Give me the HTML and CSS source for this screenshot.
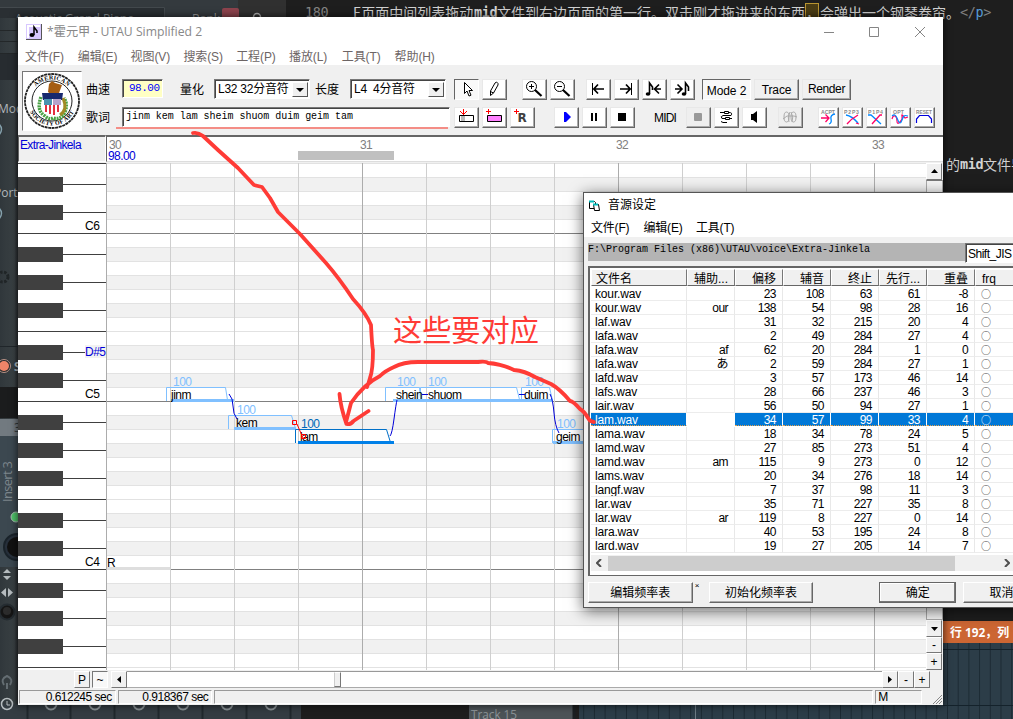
FILE: index.html
```html
<!DOCTYPE html>
<html lang="zh-CN">
<head>
<meta charset="utf-8">
<title>UTAU Simplified 2</title>
<link rel="stylesheet" href="styles.css">
</head>
<body>
<div class="desktop">
  <svg class="backdrop" width="1013" height="719" viewBox="0 0 1013 719">
    <defs>
      <pattern id="beats" x="947" y="0" width="10.7" height="56" patternUnits="userSpaceOnUse"><rect width="11" height="56" fill="#2c3d48"/><rect width="1" height="56" fill="#1c2a33"/></pattern>
      <linearGradient id="rail"><stop offset="0" stop-color="#30373b"/><stop offset=".8" stop-color="#3a4144"/><stop offset="1" stop-color="#282c2f"/></linearGradient>
    </defs>
    <rect width="1013" height="719" fill="#1e1e1e"/>
    <rect width="240" height="18" fill="#343a3e"/><rect y="7" width="165" height="11" fill="#2a2f33"/>
    <path d="M0 7.500h164.500V18" fill="none" stroke="#43494d"/>
    <rect x="238" width="48" height="18" fill="#303030"/>
    <text class="ui" x="15" y="23" fill="#8b9295">Acoustic Grand Piano</text>
    <rect x="222" y="8" width="17" height="12" rx="2" fill="#8d434d"/><text class="ui" x="192" y="22.500" fill="#999">Bank</text>
    <circle cx="257" cy="17" r="3.500" fill="none" stroke="#aaa" stroke-width="1.500"/>
    <text class="code" x="305" y="17" fill="#858585">180</text>
    <text class="cjk" x="353" y="17.500">E页面中间列表拖动</text>
    <text class="code bold" x="474" y="17" fill="#d4d4d4">mid</text>
    <text class="cjk" x="497" y="17.500" textLength="308">文件到右边页面的第一行。双击刚才拖进来的东西</text>
    <rect x="805.500" y="3.500" width="13" height="16" fill="#4a3c14" stroke="#b89430"/>
    <text class="cjk" x="806" y="17.500">，</text>
    <text class="cjk" x="820" y="17.500" textLength="140">会弹出一个钢琴卷帘。</text>
    <text class="code" x="960" y="17" fill="#808080">&lt;/<tspan fill="#569cd6">p</tspan>&gt;</text>
    <text class="cjk" x="946" y="170">的</text><text class="code bold" x="960" y="169" fill="#d4d4d4">mid</text><text class="cjk" x="983" y="170">文件导</text>
    <rect y="18" width="18" height="701" fill="url(#rail)"/>
    <path d="M0 30.500h18M0 41.500h18M0 53.500h18" stroke="#232729"/>
    <rect y="54" width="18" height="26" fill="#272c30"/>
    <text class="ui" x="-2" y="113" fill="#b2b8bb">Mod</text><text class="ui" x="-6" y="197" fill="#b2b8bb">Port.</text>
    <path d="M-2 123q7 6 0 13M-2 207q7 6 0 13" fill="none" stroke="#85a1ad" stroke-width="1.500"/>
    <circle cx="3" cy="277" r="5" fill="none" stroke="#202527" stroke-width="3" stroke-dasharray="2.500 1.500"/>
    <path d="M0 346.500h18" stroke="#20262a"/>
    <circle cx="4" cy="366" r="6.500" fill="#27292a" stroke="#b69186"/><circle cx="4" cy="366" r="5" fill="#f08568"/><text class="ui bold" x="14" y="371" fill="#b2b8bb">S</text>
    <rect y="387" width="18" height="31" fill="#1b1c1d"/><rect y="419" width="18" height="17" fill="#727a80"/><text class="ui" x="14" y="432" fill="#31393d">3</text>
    <rect y="436" width="18" height="131" fill="#3c4850"/>
    <text class="insert" transform="translate(12 502) rotate(-90)">Insert 3</text>
    <circle cx="16" cy="517" r="5" fill="#51c56b" stroke="#a9bcb0"/>
    <circle cx="17" cy="547" r="13" fill="#27303b" stroke="#1a232a" stroke-width="2"/><circle cx="17" cy="547" r="10" fill="#111"/>
    <path d="M3 573l4-4 4 4zM3 576l4 4 4-4zM6 588v9l-5-4.500zM8 588v9l5-4.500z" fill="#b5bbbe"/>
    <circle cx="7" cy="612" r="7.500" fill="#151515" stroke="#252c31" stroke-width="2"/><circle cx="7" cy="611" r="4" fill="#2c2c2c"/>
    <path d="M7 689v-6m-3 2q-4-6 3-9q7 3 3 9" fill="none" stroke="#646d72" stroke-width="2"/>
    <rect y="704" width="301" height="15" fill="#343c42"/>
    <circle cx="7" cy="704" r="5.500" fill="none" stroke="#b7bdc0" stroke-width="1.500"/><path d="M7 701v4h3" fill="none" stroke="#b7bdc0"/>
    <g fill="none" stroke="#8b9397" stroke-width="2"><circle cx="51" cy="704" r="5.500"/><circle cx="95" cy="704" r="5.500"/><circle cx="139" cy="704" r="5.500"/><circle cx="183" cy="704" r="5.500"/><circle cx="227" cy="704" r="5.500"/><circle cx="271" cy="704" r="5.500"/></g>
    <path d="M27.500 705v14M70.500 705v14M114.500 705v14M158.500 705v14M202.500 705v14M246.500 705v14M290.500 705v14" stroke="#20282d" stroke-width="2"/>
    <rect x="469" y="705" width="106" height="14" fill="#4c5357"/><path d="M574 705v14" stroke="#1b1f22" stroke-width="3"/>
    <text class="track" x="471" y="718.500" textLength="46" lengthAdjust="spacingAndGlyphs">Track 15</text>
    <rect x="579" y="705" width="434" height="14" fill="url(#beats)"/><rect x="695" y="705" width="1" height="14" fill="#6c7b84"/>
    <rect x="943" y="643" width="70" height="76" fill="url(#beats)"/><path d="M943 649.500h70M943 705.500h70" stroke="#14222b"/>
    <rect x="943" y="621" width="70" height="22" fill="#cc6633"/><text class="pos" x="950" y="637" textLength="59" lengthAdjust="spacingAndGlyphs">行 192，列</text>
  </svg>

  <main class="window">
    <header class="titlebar">
      <svg width="16" height="16" viewBox="0 0 16 16"><rect width="16" height="16" fill="#d8c8ff"/><path d="M0 15.500h15.500V0" fill="none" stroke="#555"/><path d="M2 14V2h12" fill="none" stroke="#fff" stroke-width="2"/><ellipse cx="6" cy="11" rx="2.500" ry="2"/><path d="M8 11V3l3 4v2" fill="none" stroke="#000" stroke-width="1.500"/></svg>
      <span class="title">*霍元甲 - UTAU Simplified 2</span>
      <svg class="controls" width="104" height="12" viewBox="0 0 104 12" fill="none" stroke="#858585"><path d="M0 6.500h10M45.500 1.500h9v9h-9zM91 1l10 10M101 1L91 11"/></svg>
    </header>
    <nav class="menu"><span>文件(F)</span><span>编辑(E)</span><span>视图(V)</span><span>搜索(S)</span><span>工程(P)</span><span>播放(L)</span><span>工具(T)</span><span>帮助(H)</span></nav>
    <section class="toolbar">
      <div class="logo">
        <svg width="56" height="56" viewBox="0 0 56 56">
          <circle cx="28" cy="28" r="27" fill="#fff" stroke="#222" stroke-width="1.800" stroke-dasharray="3 .6"/><circle cx="28" cy="28" r="20" fill="none" stroke="#222"/>
          <path id="sealTop" d="M6.500 28a21.500 21.500 0 0 1 43 0" fill="none"/><path id="sealBottom" d="M3.500 28a24.500 24.500 0 0 0 49 0" fill="none"/>
          <text class="seal"><textPath href="#sealTop" startOffset="50%">AMERICAN</textPath></text><text class="seal"><textPath href="#sealBottom" startOffset="50%">SOCIETY OF ART</textPath></text>
          <path d="M17 24q-5 14 4 19 4 4 8 2 9 2 12-6 3-8-1-14" fill="none" stroke="#48a044" stroke-width="3.500" stroke-dasharray="2 .8"/><path d="M39 25q5 12-3 17" fill="none" stroke="#a18a25" stroke-width="3"/>
          <path d="M25 11l3-3 3 2 7 2-3 8-6 3-5-4z" fill="#a55d13"/><path d="M18 20h21l-1 7H19z" fill="#17286e"/><path d="M20 26h16v12l-7 5-9-5z" fill="#fff"/><path d="M22 32v7M26 32v9M30 32v10M34 32v7" stroke="#e32e3f" stroke-width="2"/><path d="M20 26h8v6h-8z" fill="#4a91af"/><path d="M29 26h8v6h-8z" fill="#b6a3cb"/>
        </svg>
      </div>
      <div class="bars">
        <div class="bar">
          <span class="lab l1">曲速</span><span class="field tempo">98.00</span>
          <span class="lab l2">量化</span><span class="field combo"><span>L32 32分音符</span><i class="drop"><svg width="8" height="4"><path d="M0 0h8L4 4z"/></svg></i></span>
          <span class="lab l3">长度</span><span class="field combo"><span>L4&nbsp; 4分音符</span><i class="drop"><svg width="8" height="4"><path d="M0 0h8L4 4z"/></svg></i></span>
          <div class="group g8">
            <b class="btn down"><svg viewBox="0 0 25 21"><path d="M10.500 3.500v11l2.500-2.500 2 5 2-.8-2-4.700h3.500z" fill="#fff" stroke="#000"/></svg></b>
            <b class="btn"><svg viewBox="0 0 25 21"><path d="M8.500 16.500v-4.500L13 4l1.500-1 1.500 1.500v1.500L11.500 14zM8.500 12.500l3 1.500" fill="#fff" stroke="#000"/></svg></b>
          </div>
          <div class="group g15">
            <b class="btn"><svg viewBox="0 0 25 21"><circle cx="9.500" cy="7.500" r="5" fill="none" stroke="#000"/><path d="M7 7.500h5M9.500 5v5" stroke="#000"/><path d="M13 11l6.500 6" stroke="#000" stroke-width="2.200"/></svg></b>
            <b class="btn"><svg viewBox="0 0 25 21"><circle cx="9.500" cy="7.500" r="5" fill="none" stroke="#000"/><path d="M7 7.500h5" stroke="#000"/><path d="M13 11l6.500 6" stroke="#000" stroke-width="2.200"/></svg></b>
          </div>
          <div class="group g11">
            <b class="btn"><svg viewBox="0 0 25 21"><path d="M6.500 4v12" stroke="#000"/><path d="M18 10H8M12 5.500L7.800 10l4.200 4.500" fill="none" stroke="#000" stroke-width="1.700"/></svg></b>
            <b class="btn"><svg viewBox="0 0 25 21"><path d="M17.500 4v12" stroke="#000"/><path d="M6 10h10M12 5.500l4.200 4.500-4.200 4.500" fill="none" stroke="#000" stroke-width="1.700"/></svg></b>
            <b class="btn"><svg viewBox="0 0 25 21"><ellipse cx="6" cy="15" rx="2.300" ry="1.800"/><path d="M7.500 15V4l3 4v3M19 10h-6M17 5.500L12.500 10l4.500 4.500" fill="none" stroke="#000" stroke-width="1.600"/></svg></b>
            <b class="btn"><svg viewBox="0 0 25 21"><ellipse cx="14" cy="15" rx="2.300" ry="1.800"/><path d="M15.500 15V4l3 4v4M5 10h6M7.500 5.500L12 10l-4.500 4.500" fill="none" stroke="#000" stroke-width="1.600"/></svg></b>
          </div>
          <div class="group g7 words"><b class="btn down mode">Mode 2</b><b class="btn trace">Trace</b><b class="btn render">Render</b></div>
        </div>
        <div class="bar">
          <span class="lab l1">歌词</span><span class="field lyric">jinm kem lam sheim shuom duim geim tam</span>
          <div class="group g4">
            <b class="btn"><svg viewBox="0 0 25 21"><path d="M5.500 8.500h14v6h-14z" fill="#fff" stroke="#000"/><path d="M7 9h4v5H7z" fill="#bbb"/><path d="M9.500 2v6M6 4l3.500 3.500L13 4" fill="none" stroke="red"/></svg></b>
            <b class="btn"><svg viewBox="0 0 25 21"><path d="M5.500 8.500h14v6h-14z" fill="#ff80ff" stroke="#000"/><path d="M6.500 2v5M4 4.500h5" stroke="red"/></svg></b>
            <b class="btn"><svg viewBox="0 0 25 21"><text class="rest" x="7.500" y="15">R</text><path d="M6.500 2v5M4 4.500h5" stroke="red"/></svg></b>
          </div>
          <div class="group g19">
            <b class="btn"><svg viewBox="0 0 25 21"><path d="M10 5h2l5 5-5 5h-2z" fill="#00f"/></svg></b>
            <b class="btn"><svg viewBox="0 0 25 21"><path d="M9 6h2v8H9zM13 6h2v8h-2z"/></svg></b>
            <b class="btn"><svg viewBox="0 0 25 21"><path d="M8 6h8v8H8z"/></svg></b>
          </div>
          <span class="lab midi">MIDI</span>
          <div class="group">
            <b class="btn flat"><svg viewBox="0 0 25 21"><rect x="8" y="6" width="8" height="8" rx="1" fill="#999"/></svg></b>
            <b class="btn"><svg viewBox="0 0 25 21"><path d="M6 5.500h4M10.500 4.500h4v2h-4zM15 5.500q4 0 2 3H9q-3 1-1 3h3M11.500 10.500h4v2h-4zM16 11.500h2M13 15.500H9l-2-1" fill="none" stroke="#000"/></svg></b>
            <b class="btn"><svg viewBox="0 0 25 21"><path d="M9 7h2l4-3v12l-4-3H9z"/></svg></b>
          </div>
          <div class="group g11"><b class="btn flat"><svg viewBox="0 0 25 21"><ellipse cx="8.500" cy="10" rx="2.500" ry="5" fill="none" stroke="#aaa"/><ellipse cx="15.500" cy="10" rx="2.500" ry="5" fill="none" stroke="#aaa"/><path d="M5 12l4-3h7l3 1M12 5q-3 5-1 10M13 5q3 5 1 10" fill="none" stroke="#aaa"/></svg></b></div>
          <div class="group g15 small">
            <b class="btn"><svg viewBox="0 0 21 21"><text x="3" y="6.500" textLength="14">ACPT</text><path d="M3 11h8M7.500 7.500L11 11l-3.500 4" fill="none" stroke="#f06" stroke-width="1.300"/><path d="M11 17q3-1 2-5t4-5" fill="none" stroke="#08f" stroke-width="1.300"/></svg></b>
            <b class="btn"><svg viewBox="0 0 21 21"><text x="2" y="6.500" textLength="15">P2P3</text><path d="M4 8q6 1 12 8" fill="none" stroke="#08f" stroke-width="1.300"/><path d="M16 8Q9 12 5 17M14 16l3 1" fill="none" stroke="#f06" stroke-width="1.300"/></svg></b>
            <b class="btn"><svg viewBox="0 0 21 21"><text x="2" y="6.500" textLength="15">P1P4</text><path d="M2 8h3l10 9" fill="none" stroke="#08f" stroke-width="1.300"/><path d="M16 8h-2L6 17" fill="none" stroke="#f06" stroke-width="1.300"/></svg></b>
            <b class="btn"><svg viewBox="0 0 21 21"><text x="3" y="6.500" textLength="11">OPT</text><path d="M2 12q1-4 3-3t2 5 3 1 2-6 3 2l3-1" fill="none" stroke="#f06" stroke-width="1.200"/><path d="M2 9q3-3 5 2t3 5 2-3 2-4 4 0" fill="none" stroke="#08f" stroke-width="1.200"/></svg></b>
            <b class="btn"><svg viewBox="0 0 21 21"><text x="2" y="6.500" textLength="16" lengthAdjust="spacingAndGlyphs">RESET</text><path d="M2.500 16v-4l3-3.500h9l3 3.500v4" fill="none" stroke="#00d" stroke-width="1.200"/></svg></b>
          </div>
        </div>
      </div>
    </section>
    <section class="ruler"><div class="bank">Extra-Jinkela</div><div class="measures"><svg width="835" height="25" viewBox="107 137 835 25"><rect x="298" y="151" width="96" height="9" fill="#c0c0c0"/><g fill="#808080"><text x="109" y="149">30</text><text x="360" y="149">31</text><text x="616" y="149">32</text><text x="872" y="149">33</text></g><text x="108" y="160" fill="#0000d8">98.00</text></svg></div></section>
    <section class="editor">
      <svg class="roll" width="908" height="507" viewBox="18 163 908 507">
        <defs>
          <pattern id="rows" x="0" y="65" width="40" height="168" patternUnits="userSpaceOnUse"><rect width="40" height="168" fill="#fff"/><path d="M0 14h40v14H0zM0 42h40v14H0zM0 70h40v14H0zM0 112h40v14H0zM0 140h40v14H0z" fill="#f1f1f1"/><path d="M0 14.500h40M0 28.500h40M0 42.500h40M0 56.500h40M0 70.500h40M0 84.500h40M0 98.500h40M0 112.500h40M0 126.500h40M0 140.500h40M0 154.500h40" stroke="#e2e2e2"/><path d="M0 .5h40" stroke="#808080"/></pattern>
          <pattern id="keys" x="18" y="65" width="88" height="168" patternUnits="userSpaceOnUse"><rect width="88" height="168" fill="#fff"/><path d="M0 14h45v15H0zM0 42h45v15H0zM0 70h45v15H0zM0 112h45v15H0zM0 140h45v15H0z" fill="#404040"/><path d="M0 .5h88M0 98.500h88M45 21.500h43M45 49.500h43M45 77.500h43M45 119.500h43M45 147.500h43" stroke="#404040"/></pattern>
          <pattern id="lines" x="106" y="163" width="64" height="600" patternUnits="userSpaceOnUse"><rect width="1" height="600" fill="#cfcfcf"/></pattern>
        </defs>
        <rect x="106" y="163" width="820" height="507" fill="url(#rows)"/><rect x="18" y="163" width="88" height="507" fill="url(#keys)"/><rect x="106" y="163" width="820" height="507" fill="url(#lines)"/>
        <path d="M106.500 163v507M362.500 163v507M618.500 163v507M874.500 163v507" stroke="#acacac"/>
        <rect x="85" y="345" width="21" height="13" fill="#f2f2f2"/>
        <text x="85" y="230">C6</text><text x="85" y="398">C5</text><text x="85" y="566">C4</text><text x="85" y="356" fill="#0000d8">D#5</text>
        <rect x="107" y="567" width="63" height="3" fill="#dedede"/><text x="107" y="567">R</text>
        <g fill="none" stroke="#80c0ff">
          <path d="M166.500 401v-13.500h59l2 12.500M228.500 429v-13.500h63l4 13M385.500 401v-13.500h34l1 12M420.500 401v-13.500h96l3 12M521.500 399v-11.500h28l3 13M552.500 443v-13.500h33"/>
          <path d="M171 400.500h63M234 428.500h62M393 400.500h160M553 442.500h33" stroke-width="3"/>
        </g>
        <path d="M295.500 443v-13.500h91l4 13" fill="none" stroke="#0070c8"/><path d="M298 442.500h96" stroke="#0080e8" stroke-width="3"/>
        <g fill="#80c0ff"><text x="173" y="386">100</text><text x="237" y="414">100</text><text x="397" y="386">100</text><text x="428" y="386">100</text><text x="525" y="386">100</text><text x="557" y="428">100</text></g><text x="301" y="428" fill="#0068b8">100</text>
        <g><text x="171" y="399">jinm</text><text x="236" y="427">kem</text><text x="300" y="441">lam</text><text x="396" y="399">shein</text><text x="428" y="399">shuom</text><text x="524" y="399">duim</text><text x="556" y="441">geim</text></g>
        <path d="M229 394q4 4 4 12t4 13M390 436q2-2 4-17t3-19M422 394.500h6M519 394.500h6M550 394q3 6 4 19t5 20" fill="none" stroke="#0000d8"/>
        <path d="M292.500 420.500h4v4h-4zM301.500 434.500h4v4h-4zM297 424l6 14" fill="none" stroke="red"/>
      </svg>
      <div class="vscroll"><b class="sb"><svg width="7" height="4"><path d="M0 4l3.500-4L7 4z"/></svg></b><div class="vthumb"></div><b class="sb"><svg width="7" height="4"><path d="M0 0h7L3.500 4z"/></svg></b><b class="sb">-</b><b class="sb">+</b></div>
    </section>
    <section class="hscroll"><b class="sb pb">P</b><b class="sb wave">~</b><b class="sb"><svg width="4" height="7"><path d="M4 0v7L0 3.500z"/></svg></b><div class="htrack"><i></i></div><b class="sb"><svg width="4" height="7"><path d="M0 0v7l4-3.500z"/></svg></b><b class="sb">-</b><b class="sb">+</b></section>
    <footer class="status"><span class="s1">0.612245 sec</span><span class="s2">0.918367 sec</span><span class="s3"></span><span class="s4">M</span><svg width="10" height="10"><path d="M1 10l9-9M4 10l6-6M7 10l3-3" stroke="#888"/></svg></footer>
  </main>

  <aside class="dialog">
    <header class="dtitle"><svg width="13" height="13" viewBox="0 0 13 13"><path d="M1.500 2.500h5l1 1v6h-6z" fill="#fff" stroke="#000"/><path d="M1 1.500h5v2H1z" fill="#0bb"/><path d="M5.500 5.500h5l1 6h-5z" fill="#fff" stroke="#000"/><path d="M5 4.500h5v2H5z" fill="#0bb"/></svg><span>音源设定</span></header>
    <nav class="menu dmenu"><span>文件(F)</span><span>编辑(E)</span><span>工具(T)</span></nav>
    <div class="dbody">
      <div class="pathrow"><div class="path">F:\Program Files (x86)\UTAU\voice\Extra-Jinkela</div><div class="field code-page">Shift_JIS</div></div>
      <div class="list">
        <div class="row head"><span>文件名</span><span>辅助...</span><span>偏移</span><span>辅音</span><span>终止</span><span>先行...</span><span>重叠</span><span>frq</span></div>
        <div class="row"><span>kour.wav</span><span></span><span>23</span><span>108</span><span>63</span><span>61</span><span>-8</span><span>○</span></div>
        <div class="row"><span>kour.wav</span><span>our</span><span>138</span><span>54</span><span>98</span><span>28</span><span>16</span><span>○</span></div>
        <div class="row"><span>laf.wav</span><span></span><span>31</span><span>32</span><span>215</span><span>20</span><span>4</span><span>○</span></div>
        <div class="row"><span>lafa.wav</span><span></span><span>2</span><span>49</span><span>284</span><span>27</span><span>4</span><span>○</span></div>
        <div class="row"><span>lafa.wav</span><span>af</span><span>62</span><span>20</span><span>284</span><span>1</span><span>0</span><span>○</span></div>
        <div class="row"><span>lafa.wav</span><span>あ</span><span>2</span><span>59</span><span>284</span><span>27</span><span>1</span><span>○</span></div>
        <div class="row"><span>lafd.wav</span><span></span><span>3</span><span>57</span><span>173</span><span>46</span><span>14</span><span>○</span></div>
        <div class="row"><span>lafs.wav</span><span></span><span>28</span><span>66</span><span>237</span><span>46</span><span>3</span><span>○</span></div>
        <div class="row"><span>lair.wav</span><span></span><span>56</span><span>50</span><span>94</span><span>27</span><span>1</span><span>○</span></div>
        <div class="row selected"><span>lam.wav</span><span></span><span>34</span><span>57</span><span>99</span><span>33</span><span>4</span><span>○</span></div>
        <div class="row"><span>lama.wav</span><span></span><span>18</span><span>34</span><span>78</span><span>24</span><span>5</span><span>○</span></div>
        <div class="row"><span>lamd.wav</span><span></span><span>27</span><span>85</span><span>273</span><span>51</span><span>4</span><span>○</span></div>
        <div class="row"><span>lamd.wav</span><span>am</span><span>115</span><span>9</span><span>273</span><span>0</span><span>12</span><span>○</span></div>
        <div class="row"><span>lams.wav</span><span></span><span>20</span><span>34</span><span>276</span><span>18</span><span>14</span><span>○</span></div>
        <div class="row"><span>langf.wav</span><span></span><span>7</span><span>37</span><span>98</span><span>11</span><span>3</span><span>○</span></div>
        <div class="row"><span>lar.wav</span><span></span><span>35</span><span>71</span><span>227</span><span>35</span><span>8</span><span>○</span></div>
        <div class="row"><span>lar.wav</span><span>ar</span><span>119</span><span>8</span><span>227</span><span>0</span><span>14</span><span>○</span></div>
        <div class="row"><span>lara.wav</span><span></span><span>40</span><span>53</span><span>195</span><span>24</span><span>8</span><span>○</span></div>
        <div class="row"><span>lard.wav</span><span></span><span>19</span><span>27</span><span>205</span><span>14</span><span>7</span><span>○</span></div>
        <div class="lscroll"><svg width="6" height="8"><path d="M5 0L1 4l4 4" fill="none" stroke="#505050" stroke-width="2"/></svg><i></i><svg width="6" height="8"><path d="M1 0l4 4-4 4" fill="none" stroke="#505050" stroke-width="2"/></svg></div>
      </div>
      <div class="actions"><button class="edit">编辑频率表</button><sup>×</sup><button class="init">初始化频率表</button><button class="ok">确定</button><button class="cancel">取消</button></div>
    </div>
  </aside>

  <svg class="notes" width="1013" height="719" viewBox="0 0 1013 719" fill="none" stroke="#ff3b36" stroke-linecap="round" stroke-linejoin="round">
    <path d="M116 128h332" stroke="#f48d86" stroke-width="2" stroke-linecap="butt"/>
    <path stroke-width="3.800" d="M193 133q5-1 10 3l15 14 20 18 16 17 8 2 8 11 8 14 22 22 26 29q13 15 27 36 13 14 18 26 1 21 2 25 0 20-3 28-1 4-3 9M594 422q-4 0-6-4-4-7-8-9-7-8-10-8-10-12-19-17l-16-7q-10-6-21-7-12-6-26-7-2-2-10-1h-60q-15 0-24 5-9 4-14 9-16 8-29 27-2 8-5 19M339.500 394q1 13 7 30 4 1 7-3l15-10"/>
    <text class="callout" x="393" y="341">这些要对应</text>
  </svg>
</div>
</body>
</html>
```
FILE: styles.css
```css
* { box-sizing: border-box; }
body { margin: 0; font: 12px/14px "Liberation Sans", "Noto Sans CJK SC", sans-serif; color: #000; }
.desktop { position: relative; width: 1013px; height: 719px; overflow: hidden; background: #1e1e1e; }
.backdrop, .notes { position: absolute; left: 0; top: 0; }
.notes { pointer-events: none; z-index: 3; }
svg { display: block; flex: none; }
.ui { font: 12px "Open Sans", sans-serif; }
.ui.bold, .code.bold { font-weight: bold; }
.code { font: 13.5px "DejaVu Sans Mono", monospace; letter-spacing: -.4px; }
.cjk { font: 14px "Noto Sans CJK SC", sans-serif; fill: #d0d0d0; }
.insert { font: 13px "Open Sans", sans-serif; fill: #7c868c; letter-spacing: -.7px; }
.track { font: 13px "Open Sans", sans-serif; fill: #8d9498; }
.pos { font: bold 12px "Open Sans", "Noto Sans CJK SC", sans-serif; fill: #fff; }
.callout { font: 29.2px "Noto Sans CJK SC", sans-serif; fill: #ff3b36; stroke: none; }

.window { position: absolute; left: 18px; top: 17px; width: 925px; height: 688px; display: flex; flex-direction: column; background: #f0f0f0; box-shadow: 0 0 7px 1px #0009; }
.window > * { flex: none; }
.titlebar { display: flex; align-items: center; height: 29px; padding: 0 15px 0 8px; background: #fff; color: #888; }
.title { flex: 1; padding-left: 5px; font: 12.2px/16px "Open Sans", "Noto Sans CJK SC", sans-serif; }
.menu { display: flex; height: 19px; gap: 14px; padding: 4px 7px 0; background: #fff; color: #6d6565; white-space: nowrap; }
.menu span { width: 38.8px; letter-spacing: -.1px; }
.toolbar { display: flex; height: 70px; padding: 6px 0 0 4px; gap: 4px; }
.logo { width: 60px; height: 60px; padding: 1px; background: #fff; border: 1px solid; border-color: #777 #fff #fff #777; }
.seal { font: bold 6px "Liberation Serif", serif; text-anchor: middle; letter-spacing: .3px; }
.bars { padding-top: 8px; display: grid; grid-template-rows: 28px 28px; }
.bar { display: flex; align-items: flex-start; white-space: nowrap; }
.lab { padding-top: 4px; }
.l1 { width: 36px; } .l2 { width: 52px; padding-left: 18px; } .l3 { width: 40px; padding-left: 5px; }
.midi { width: 51px; padding-left: 19px; letter-spacing: -.8px; }
.field { height: 20px; background: #fff; border: 1px solid; border-color: #777 #fff #fff #777; box-shadow: inset 1px 1px #444; }
.tempo { width: 41px; height: 19px; margin-right: -1px; padding: 2px 2px 0 6px; background: #ffffc4; color: #00f; font: 11px/13px "Liberation Mono", monospace; letter-spacing: -.5px; }
.combo { display: flex; justify-content: space-between; width: 96px; padding: 2px 1px 1px 3px; letter-spacing: -.25px; }
.drop { display: grid; place-items: center; width: 16px; height: 15px; background: #f0f0f0; border: 1px solid; border-color: #fff #555 #555 #fff; }
.lyric { width: 328px; padding: 2px 3px; font: 10px/14px "Liberation Mono", monospace; letter-spacing: -.03px; }
.group { display: flex; gap: 3px; }
.g4 { margin-left: 4px; } .g7 { margin-left: 7px; } .g8 { margin-left: 8px; } .g11 { margin-left: 11px; } .g15 { margin-left: 15px; } .g19 { margin-left: 19px; }
.btn { width: 25px; height: 21px; font-weight: normal; background: #fff; border: 1px solid; border-color: #e8e8e8 #666 #666 #e8e8e8; box-shadow: inset -1px -1px #aaa; text-align: center; }
.btn svg { width: 25px; height: 21px; margin: -1px; }
.btn.down { border-color: #666 #fff #fff #666; box-shadow: none; background: #f9f9f9; }
.btn.flat { background: #efefef; }
.small .btn { width: 21px; }
.small .btn svg { width: 21px; }
.small text { font: bold 5.2px "Liberation Sans", sans-serif; fill: #888; }
.rest { font: bold 12px "DejaVu Sans", sans-serif; fill: #404040; }
.words .btn { background: #f0f0f0; padding-top: 3px; letter-spacing: -.1px; }
.words .btn.mode { width: 49px; padding-top: 4px; background: #f8f8f8; }
.words .btn.trace { width: 45px; } .words .btn.render { width: 49px; padding-top: 2px; letter-spacing: -.4px; }

.ruler { display: flex; height: 28px; padding-bottom: 1px; font-size: 12px; }
.bank { width: 88px; padding: 1px 1px; border: 1px solid; border-width: 2px 1px 1px 1px; border-color: #666 #fff #fff #666; color: #0000d8; letter-spacing: -.65px; }
.measures { flex: 1; background: #fff; border-top: 2px solid #666; border-left: 1px solid #666; border-bottom: 1px solid #ddd; }
.measures svg { letter-spacing: -.6px; }
.editor { display: flex; height: 507px; }
.roll { font: 12px "Liberation Sans", sans-serif; }
.roll text { letter-spacing: -.5px; }
.vscroll { width: 17px; display: flex; flex-direction: column; background: #f0f0f0; }
.sb { display: grid; place-items: center; flex: none; width: 16px; height: 16.600px; font-weight: normal; background: #f0f0f0; border: 1px solid; border-color: #fff #777 #777 #fff; }
.vthumb { flex: 1; background: #f4f4f4; border: 1px solid #aaa; border-top-color: #777; }
.hscroll { display: flex; height: 18px; padding: 1px 13px 0 56px; }
.hscroll .sb { height: 17px; }
.hscroll .wave { width: 16px; margin: 0 3px 0 2px; background: #f8f8f8; border-color: #777 #fff #fff #777; line-height: 10px; }
.htrack { flex: 1; height: 17px; background: #fff; border-top: 1px solid #999; border-bottom: 1px solid #aaa; padding-left: 207px; }
.htrack i { display: block; width: 7px; height: 15px; background: #f0f0f0; border: 1px solid; border-color: #fff #777 #777 #ccc; }
.status { display: flex; height: 17px; padding: 2px 1px 1px 1px; gap: 2px; }
.status span { height: 14px; border: 1px solid; border-color: #999 #fff #fff #999; line-height: 13px; text-align: right; padding-right: 3px; letter-spacing: -.5px; }
.status .s1 { width: 97px; } .status .s2 { width: 95px; } .status .s3 { width: 661px; } .status .s4 { width: 47px; text-align: left; padding-left: 2px; }
.status svg { margin: 4px 0 0 8px; }

.dialog { position: absolute; z-index: 2; left: 583px; top: 192px; width: 458px; height: 416px; border: 1px solid #555; background: #f0f0f0; box-shadow: 0 3px 14px #0009; }
.dtitle { display: flex; align-items: center; gap: 7px; height: 24px; padding: 0 4px; background: #fff; }
.dmenu { height: 20px; padding-top: 4px; gap: 13.5px; color: #000; }
.dmenu span { width: 39px; letter-spacing: -.2px; }
.dbody { padding: 6px 0 0 4px; }
.pathrow { display: flex; height: 23px; }
.path { flex: none; width: 377px; height: 18px; background: #b4b4b4; font: 10px/13px "Liberation Mono", monospace; }
.code-page { width: 90px; padding: 3px 2px; letter-spacing: -.5px; }
.list { height: 310px; padding: 1px 0 0 1px; background: #fff; border: 2px solid #666; border-right: 0; border-bottom-width: 1px; }
.row { display: grid; grid-template-columns: 96px repeat(6, 48px) 90px; height: 14px; letter-spacing: -.55px; }
.row span { height: 14px; padding-right: 6px; line-height: 14px; text-align: right; border-right: 1px solid #e8e8e8; border-bottom: 1px solid #ececec; white-space: nowrap; overflow: hidden; }
.row span:first-child { padding-left: 4px; text-align: left; letter-spacing: -.15px; }
.row span:last-child { padding-left: 6px; text-align: left; color: #444; font: 10px/13px "Noto Sans CJK SC", sans-serif; }
.row.head { height: 18px; letter-spacing: 0; }
.row.head span { height: 17px; padding-top: 2px; line-height: 14px; background: #f0f0f0; border: 1px solid; border-color: #fff #777 #666 #fff; color: #000; }
.row.head span:first-child { letter-spacing: 0; }
.row.head span:last-child { font: inherit; padding-top: 2px; }
.row.selected span { height: 13px; background: #0078d7; color: #fff; border-bottom: 1px dotted #e5a04b; border-right-color: #fff; }
.row.selected span:nth-child(2) { background: #fff; border-color: #fff; }
.lscroll { display: flex; align-items: center; height: 16px; margin-top: 2px; gap: 6px; padding-left: 5px; background: #f0f0f0; }
.lscroll i { width: 347px; height: 15px; background: #cdcdcd; }
.lscroll svg:last-child { margin-left: 43px; }
.actions { display: flex; align-items: flex-start; padding-top: 6px; }
.actions button { height: 21px; padding: 0; font: inherit; background: #f0f0f0; border: 1px solid; border-color: #fff #666 #666 #fff; box-shadow: inset -1px -1px #aaa; }
.actions sup { width: 16px; padding-left: 2px; font-size: 8px; line-height: 8px; }
.actions .edit, .actions .init { width: 105px; }
.actions .ok { width: 77px; margin: 0 7px 0 66px; border-color: #666; box-shadow: inset -1px -1px #777, inset 1px 1px #fff; }
.actions .cancel { width: 77px; }
```
